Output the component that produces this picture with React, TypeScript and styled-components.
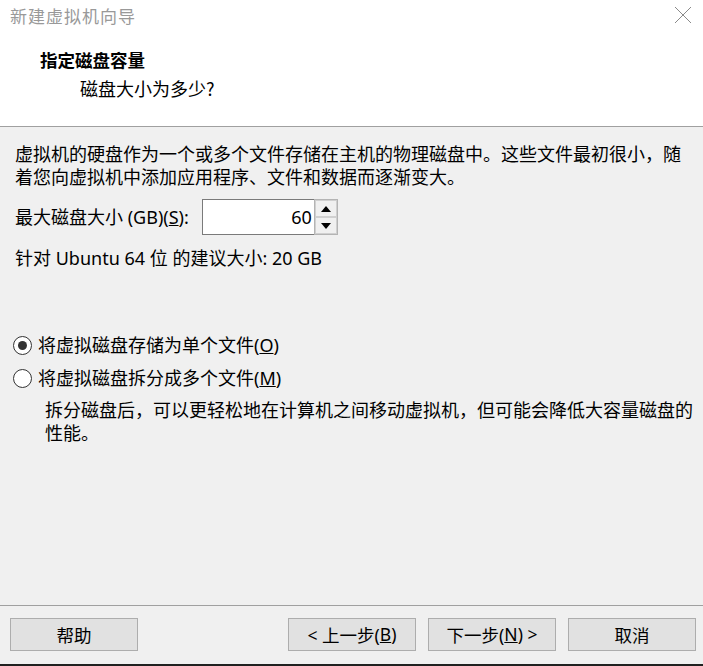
import { FC } from "react";
import styled, { createGlobalStyle } from "styled-components";

const GlobalStyle = createGlobalStyle`
  html, body {
    margin: 0;
    padding: 0;
    background: #f0f0f0;
  }
  body {
    font-family: "Noto Sans", "Noto Sans CJK SC", sans-serif;
    color: #000;
  }
`;

const App: FC = () => {
  return (
    <Window>
      <GlobalStyle />
      <Top>
        <TitleBar>
          <span className="caption">新建虚拟机向导</span>
          <CloseIcon width="18" height="18" viewBox="0 0 18 18">
            <path d="M1 1 L17 17 M17 1 L1 17" stroke="#8a8a8a" strokeWidth="1" fill="none" />
          </CloseIcon>
        </TitleBar>
        <Header>
          <h1 className="head-title">指定磁盘容量</h1>
          <h2 className="head-sub">磁盘大小为多少?</h2>
        </Header>
      </Top>

      <Body>
        <Paragraph>
          虚拟机的硬盘作为一个或多个文件存储在主机的物理磁盘中。这些文件最初很小，随
          <br />
          着您向虚拟机中添加应用程序、文件和数据而逐渐变大。
        </Paragraph>

        <SizeRow>
          <span>
            最大磁盘大小 (GB)(<u>S</u>):
          </span>
          <Spin>
            <SpinInput>60</SpinInput>
            <SpinButtons>
              <SpinButton>
                <svg width="10" height="6" viewBox="0 0 10 6">
                  <path d="M0 6 L5 0 L10 6 Z" fill="#000" />
                </svg>
              </SpinButton>
              <SpinButton>
                <svg width="10" height="6" viewBox="0 0 10 6">
                  <path d="M0 0 L10 0 L5 6 Z" fill="#000" />
                </svg>
              </SpinButton>
            </SpinButtons>
          </Spin>
        </SizeRow>

        <Hint>针对 Ubuntu 64 位 的建议大小: 20 GB</Hint>

        <Options>
          <RadioRow>
            <Radio $checked />
            <span>
              将虚拟磁盘存储为单个文件(<u>O</u>)
            </span>
          </RadioRow>
          <RadioRow>
            <Radio />
            <span>
              将虚拟磁盘拆分成多个文件(<u>M</u>)
            </span>
          </RadioRow>
          <Description>
            拆分磁盘后，可以更轻松地在计算机之间移动虚拟机，但可能会降低大容量磁盘的
            <br />
            性能。
          </Description>
        </Options>
      </Body>

      <Footer>
        <Button>帮助</Button>
        <div className="nav">
          <Button>
            &lt; 上一步(<u>B</u>)
          </Button>
          <Button>
            下一步(<u>N</u>) &gt;
          </Button>
          <Button>取消</Button>
        </div>
      </Footer>
      <BottomEdge />
    </Window>
  );
};

export default App;

const Window = styled.div`
  display: flex;
  flex-direction: column;
  width: 703px;
  height: 666px;
  overflow: hidden;
  background: #f0f0f0;
`;

const Top = styled.div`
  background: #ffffff;
  height: 126px;
  border-bottom: 1px solid #a0a0a0;
  display: flex;
  flex-direction: column;
`;

const TitleBar = styled.div`
  display: flex;
  align-items: center;
  justify-content: space-between;
  height: 30px;
  padding: 0 10px 0 10px;
  .caption {
    font-family: "Noto Sans CJK SC", sans-serif;
    font-size: 17px;
    color: #999999;
    letter-spacing: 1px;
  }
`;

const CloseIcon = styled.svg`
  display: block;
  margin-right: 1px;
`;

const Header = styled.div`
  display: flex;
  flex-direction: column;
  padding: 18px 0 0 40px;
  .head-title {
    margin: 0 0 4px 0;
    font-family: "Noto Sans CJK SC", sans-serif;
    font-size: 17.5px;
    line-height: 24px;
    font-weight: 700;
    color: #000;
  }
  .head-sub {
    margin: 0;
    padding-left: 40px;
    font-family: "Noto Sans CJK SC", sans-serif;
    font-size: 18px;
    line-height: 24px;
    font-weight: 400;
    color: #000;
  }
`;

const Body = styled.div`
  flex: 1;
  display: flex;
  flex-direction: column;
  padding: 16px 0 0 15px;
  font-size: 18px;
  line-height: 23px;
`;

const Paragraph = styled.p`
  margin: 0;
  white-space: nowrap;
`;

const SizeRow = styled.div`
  display: flex;
  align-items: center;
  gap: 13px;
  margin-top: 10px;
  height: 36px;
`;

const Spin = styled.div`
  display: flex;
  height: 36px;
`;

const SpinInput = styled.div`
  box-sizing: border-box;
  width: 112px;
  height: 36px;
  background: #fff;
  border: 1px solid #7a7a7a;
  border-right: none;
  display: flex;
  align-items: center;
  justify-content: flex-end;
  padding-right: 2px;
  font-size: 18px;
`;

const SpinButtons = styled.div`
  box-sizing: border-box;
  display: flex;
  flex-direction: column;
  width: 24px;
  height: 36px;
  border: 1px solid #b4b4b4;
`;

const SpinButton = styled.div`
  box-sizing: border-box;
  flex: 1;
  display: flex;
  align-items: center;
  justify-content: center;
  background: #f0f0f0;
  border: 1px solid #d0d0d0;
  svg {
    display: block;
  }
`;

const Hint = styled.div`
  margin-top: 12px;
`;

const Options = styled.div`
  display: flex;
  flex-direction: column;
  margin-top: 64px;
`;

const RadioRow = styled.div`
  display: flex;
  align-items: center;
  gap: 6px;
  height: 23px;
  margin-bottom: 10px;
  margin-left: -2px;
`;

const Radio = styled.span<{ $checked?: boolean }>`
  box-sizing: border-box;
  position: relative;
  display: inline-block;
  width: 19px;
  height: 19px;
  border-radius: 50%;
  border: 1px solid #333;
  background: #fff;
  &::after {
    content: "";
    display: ${({ $checked }) => ($checked ? "block" : "none")};
    position: absolute;
    left: 4px;
    top: 4px;
    width: 9px;
    height: 9px;
    border-radius: 50%;
    background: #333;
  }
`;

const Description = styled.p`
  margin: -1px 0 0 30px;
  white-space: nowrap;
`;

const Footer = styled.div`
  display: flex;
  align-items: center;
  justify-content: space-between;
  height: 58px;
  padding: 0 7px 0 10px;
  border-top: 1px solid #a0a0a0;
  .nav {
    display: flex;
    gap: 12px;
  }
`;

const Button = styled.div`
  box-sizing: border-box;
  width: 128px;
  height: 33px;
  display: flex;
  align-items: center;
  justify-content: center;
  background: #e1e1e1;
  border: 1px solid #adadad;
  font-size: 17.5px;
  color: #000;
  margin-top: -2px;
`;

const BottomEdge = styled.div`
  height: 2px;
  background: #202020;
`;
